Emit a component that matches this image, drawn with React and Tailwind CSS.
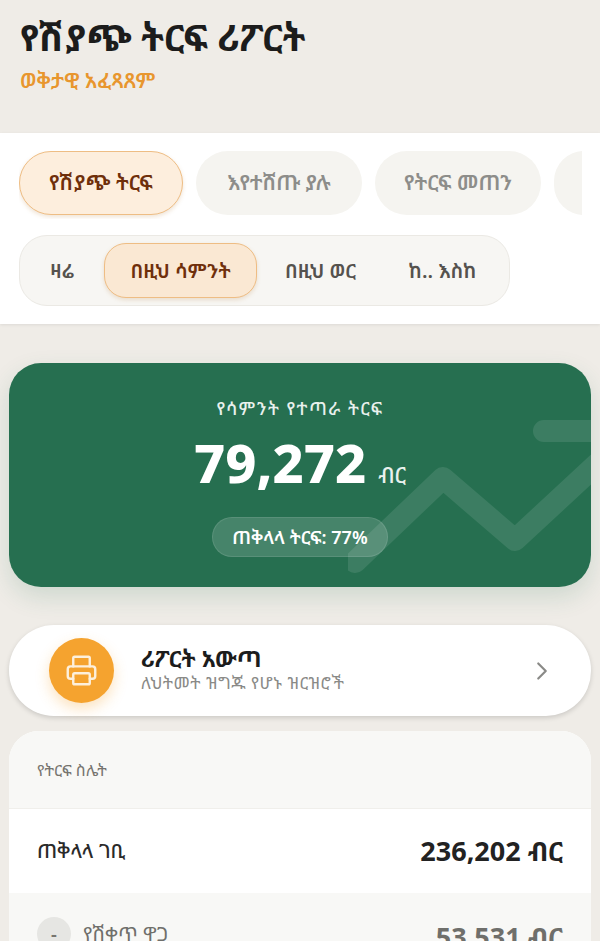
import React from "react";
import { Printer, ChevronRight } from "lucide-react";

const FONT = "font-['Noto_Sans_Ethiopic','Noto_Sans','DejaVu_Sans',sans-serif]";

const tabs = [
  { label: "የሽያጭ ትርፍ", active: true },
  { label: "እየተሸጡ ያሉ" },
  { label: "የትርፍ መጠን" },
];

const periods = [
  { label: "ዛሬ", width: "w-[84px]" },
  { label: "በዚህ ሳምንት", width: "w-[153px]", active: true },
  { label: "በዚህ ወር", width: "w-[127px]" },
  { label: "ከ.. እስከ", width: "w-[117px]" },
];

const App = () => {
  return (
    <div className={`h-[941px] w-[600px] overflow-hidden bg-[#efece7] ${FONT}`}>
      {/* Header */}
      <div className="h-[133px] px-5 pt-[14px]">
        <h1 className="text-[37px] font-bold leading-[46px] text-[#1c1c1c]">የሽያጭ ትርፍ ሪፖርት</h1>
        <p className="mt-2 text-[21px] font-semibold leading-6 text-[#e8962e]">ወቅታዊ አፈጻጸም</p>
      </div>

      {/* Filters */}
      <div className="h-[191px] bg-white pl-[19px] pt-[18px] shadow-[0_1px_3px_rgba(0,0,0,0.08)]">
        <div className="flex w-[563px] gap-[13px] overflow-hidden pb-1">
          {tabs.map((tab) => (
            <div
              key={tab.label}
              className={
                tab.active
                  ? "flex h-[64px] w-[164px] shrink-0 items-center justify-center rounded-[32px] border border-[#eebd84] bg-[#fdeedd] text-[21px] font-semibold text-[#6f2f0b] shadow-[0_2px_4px_rgba(180,120,50,0.2)]"
                  : "flex h-[64px] w-[166px] shrink-0 items-center justify-center rounded-[32px] bg-[#f5f4f0] text-[21px] font-semibold text-[#8d8d8a]"
              }
            >
              {tab.label}
            </div>
          ))}
          <div className="h-[64px] w-[60px] shrink-0 rounded-[32px] bg-[#f5f4f0]" />
        </div>

        <div className="mt-4 flex h-[71px] w-[491px] items-center rounded-[28px] border border-[#ebe9e4] bg-[#f7f6f3]">
          {periods.map((p) => (
            <div
              key={p.label}
              className={
                p.active
                  ? `flex h-[55px] ${p.width} items-center justify-center rounded-[22px] border border-[#eebd84] bg-[#fae8d3] text-[20px] font-semibold text-[#6f2f0b] shadow-[0_2px_4px_rgba(180,120,50,0.2)]`
                  : `flex h-[55px] ${p.width} items-center justify-center text-[20px] font-semibold text-[#55524e]`
              }
            >
              {p.label}
            </div>
          ))}
        </div>
      </div>

      <div className="px-[9px] pt-[39px]">
        {/* Profit card */}
        <div className="relative h-[224px] overflow-hidden rounded-[32px] bg-[#266f50] text-white shadow-[0_10px_24px_rgba(38,111,80,0.16)]">
          <svg
            className="absolute left-[339px] top-[52px] text-white/10"
            width="300"
            height="170"
            viewBox="0 0 300 170"
            fill="none"
            stroke="currentColor"
            strokeWidth="22"
            strokeLinecap="round"
            strokeLinejoin="round"
          >
            <polyline points="7,147 95,63 167,125 291,10" />
            <polyline points="196,16 291,16 291,100" />
          </svg>
          <div className="relative flex flex-col items-center">
            <p className="mt-[35px] text-[18px] font-medium leading-5 tracking-[1.5px] text-[#e9f1ed]">የሳምንት የተጣራ ትርፍ</p>
            <div className="mt-[14px] flex items-baseline gap-[12px]">
              <span className="text-[54px] font-extrabold leading-[60px]">79,272</span>
              <span className="text-[22px] font-medium text-[#e9f1ed]">ብር</span>
            </div>
            <div className="mt-[25px] flex h-[40px] w-[176px] items-center justify-center rounded-[20px] border border-white/10 bg-white/15 text-[18px] font-semibold">
              ጠቅላላ ትርፍ: 77%
            </div>
          </div>
        </div>

        {/* Print report */}
        <div className="mt-[38px] flex h-[91px] items-center rounded-[45px] bg-white pl-10 pr-[34px] shadow-[0_2px_5px_rgba(0,0,0,0.15)]">
          <div className="flex h-[65px] w-[65px] items-center justify-center rounded-full bg-[#f5a32f] text-[#fdf0dc] shadow-[0_6px_14px_rgba(246,162,45,0.3)]">
            <Printer size={33} strokeWidth={1.75} />
          </div>
          <div className="ml-[27px] flex-1 pb-1">
            <p className="text-[23px] font-bold leading-7 text-[#1c1c1c]">ሪፖርት አውጣ</p>
            <p className="text-[17px] leading-[22px] tracking-[0.5px] text-[#8a8a87]">ለህትመት ዝግጁ የሆኑ ዝርዝሮች</p>
          </div>
          <ChevronRight size={30} strokeWidth={1.75} className="text-[#8a8a87]" />
        </div>

        {/* Profit breakdown */}
        <div className="mt-[15px] overflow-hidden rounded-[30px] bg-white">
          <div className="flex h-[77px] items-center bg-[#f8f8f6] px-7 text-[16px] text-[#76746f]">
            የትርፍ ስሌት
          </div>
          <div className="flex h-[85px] items-center justify-between border-t border-[#f0efeb] px-7">
            <span className="text-[20px] font-medium text-[#2a2a2a]">ጠቅላላ ገቢ</span>
            <span className="text-[27px] font-bold text-[#222222]">236,202 ብር</span>
          </div>
          <div className="flex h-[85px] items-start justify-between bg-[#f8f8f6] px-7 pt-[24px]">
            <div className="flex items-center gap-3">
              <div className="flex h-[34px] w-[34px] items-center justify-center rounded-full bg-[#e6e6e3] text-[18px] font-bold text-[#77756f]">
                -
              </div>
              <span className="text-[20px] text-[#6f6f6b]">የሽቀጥ ዋጋ</span>
            </div>
            <span className="text-[27px] font-bold text-[#6f6f6b]">53,531 ብር</span>
          </div>
        </div>
      </div>
    </div>
  );
};

export default App;
